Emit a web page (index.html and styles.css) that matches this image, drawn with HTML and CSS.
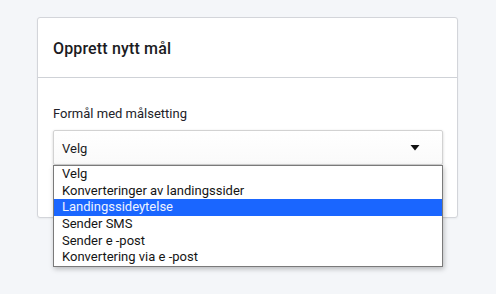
FILE: index.html
```html
<!DOCTYPE html>
<html lang="no">
<head>
<meta charset="utf-8">
<title>Opprett nytt mål</title>
<link rel="stylesheet" href="styles.css">
</head>
<body>
<div class="card">
  <div class="card-header">
    <h2 class="card-title">Opprett nytt mål</h2>
  </div>
  <div class="card-body">
    <div class="field-label">Formål med målsetting</div>
    <div class="select-wrap">
      <div class="select">
        <span class="select-value">Velg</span>
        <svg class="select-arrow" width="10" height="6" viewBox="0 0 10 6"><path d="M0.5 0H9.5L5 5.5Z" fill="#111"/></svg>
      </div>
      <ul class="options">
        <li class="option">Velg</li>
        <li class="option">Konverteringer av landingssider</li>
        <li class="option selected">Landingssideytelse</li>
        <li class="option">Sender SMS</li>
        <li class="option">Sender e -post</li>
        <li class="option">Konvertering via e -post</li>
      </ul>
    </div>
  </div>
</div>
</body>
</html>
```

FILE: styles.css
```css
html, body {
  margin: 0;
  padding: 0;
}
body {
  background: #f4f6f9;
  font-family: Roboto, "Liberation Sans", sans-serif;
  color: #1d1d1f;
  width: 496px;
  height: 294px;
  overflow: hidden;
}
.card {
  margin: 17px 0 0 37px;
  width: 421px;
  height: 201px;
  box-sizing: border-box;
  background: #fff;
  border: 1px solid #d3d5da;
  border-radius: 3px;
  box-shadow: 0 1px 2px rgba(0, 0, 0, 0.05);
}
.card-header {
  height: 60px;
  box-sizing: border-box;
  border-bottom: 1px solid #cfd2d7;
  display: flex;
  align-items: center;
  padding: 1px 15px 0 15px;
}
.card-title {
  margin: 0;
  font-size: 16px;
  font-weight: 500;
  letter-spacing: 0.15px;
  color: #1b1b22;
}
.card-body {
  padding: 28px 15px 0 15px;
}
.field-label {
  font-size: 13px;
  line-height: 16px;
  color: #222228;
}
.select-wrap {
  position: relative;
  margin-top: 8px;
  width: 390px;
}
.select {
  height: 35px;
  box-sizing: border-box;
  border: 1px solid #d2d2d2;
  border-radius: 2px;
  background: linear-gradient(#fff, #fafafa);
  box-shadow: 0 1px 3px rgba(0, 0, 0, 0.18);
  display: flex;
  align-items: center;
  justify-content: space-between;
  padding: 1px 22px 0 8px;
  font-size: 13px;
  color: #1b1b22;
}
.select-arrow {
  display: block;
}
.options {
  position: absolute;
  top: 35px;
  left: 0;
  width: 390px;
  box-sizing: border-box;
  margin: 0;
  padding: 0;
  list-style: none;
  background: #fff;
  border: 1px solid #7a7a7a;
  box-shadow: 1px 2px 5px rgba(0, 0, 0, 0.25);
}
.option {
  height: 16.67px;
  line-height: 15px;
  padding-left: 8px;
  font-size: 13px;
  color: #151515;
  white-space: nowrap;
}
.option.selected {
  background: #1a66ff;
  color: #eef3ff;
}
```
